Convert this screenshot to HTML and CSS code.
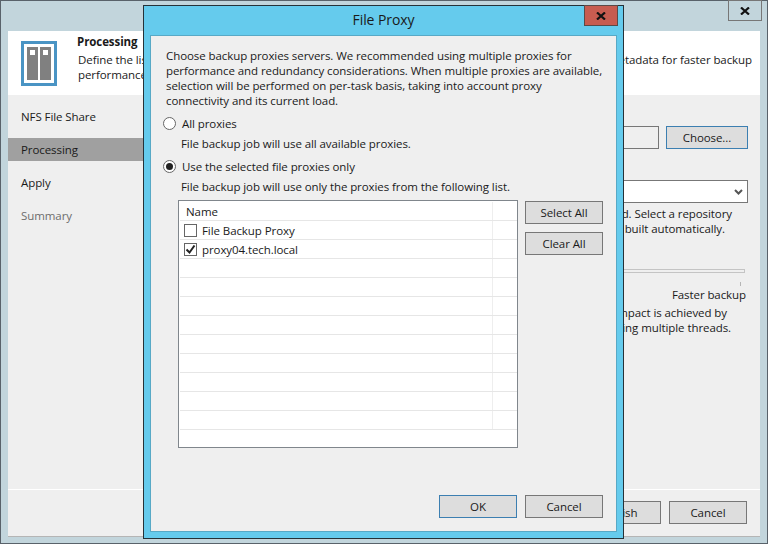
FILE: index.html
```html
<!DOCTYPE html>
<html lang="en">
<head>
    <meta charset="UTF-8">
    <title>File Proxy</title>
    <link rel="stylesheet" href="styles.css">
</head>
<body>
    <div class="window">
        <div class="titlebar">
            <button class="win-close">
                <svg width="10" height="8" viewBox="0 0 10 8"><path d="M1 .5l8 7M9 .5l-8 7" fill="none" stroke="#111" stroke-width="2.2"/></svg>
            </button>
        </div>
        <div class="wizard">
            <div class="head">
                <svg class="head-icon" width="36" height="45" viewBox="0 0 36 45">
                    <rect x="1.5" y="1.5" width="33" height="42" fill="#fff" stroke="#4a94c4" stroke-width="3"/>
                    <rect x="6" y="6" width="11" height="33" fill="#808080"/>
                    <rect x="19" y="6" width="11" height="33" fill="#808080"/>
                    <rect x="9" y="9" width="5" height="5" fill="#fff"/>
                    <rect x="22" y="9" width="5" height="5" fill="#fff"/>
                </svg>
                <div class="head-text">
                    <div class="head-title">Processing</div>
                    <div class="head-line">
                        <span>Define the list of backup proxies and a repository</span>
                        <span>for storing file metadata for faster backup</span>
                    </div>
                    <div>performance.</div>
                </div>
            </div>
            <div class="body">
                <div class="steps">
                    <div class="step">NFS File Share</div>
                    <div class="step selected">Processing</div>
                    <div class="step">Apply</div>
                    <div class="step muted">Summary</div>
                </div>
                <div class="main">
                    <div class="row">
                        <input class="field" type="text">
                        <button class="btn focus choose">Choose...</button>
                    </div>
                    <div class="select">
                        <svg width="9" height="6" viewBox="0 0 9 6"><path d="M1 1l3.5 3.5L8 1" fill="none" stroke="#555" stroke-width="2"/></svg>
                    </div>
                    <div class="note">
                        <div class="end-a">Metadata repository will be used. Select a repository</div>
                        <div class="end-b">and the index will be built automatically.</div>
                    </div>
                    <div class="slider"></div>
                    <div class="tick"></div>
                    <div class="slider-label">Faster backup</div>
                    <div class="note">
                        <div class="end-c">Lower source impact is achieved by</div>
                        <div class="end-d">copying the data using multiple threads.</div>
                    </div>
                </div>
            </div>
            <div class="foot">
                <button class="btn">Finish</button>
                <button class="btn">Cancel</button>
            </div>
        </div>
    </div>

    <div class="dialog">
        <div class="dialog-title">
            <span>File Proxy</span>
            <button class="dialog-close">
                <svg width="10" height="8" viewBox="0 0 10 8"><path d="M1 .5l8 7M9 .5l-8 7" fill="none" stroke="#111" stroke-width="2.2"/></svg>
            </button>
        </div>
        <div class="dialog-body">
            <p class="intro">Choose backup proxies servers. We recommended using multiple proxies for performance and redundancy considerations. When multiple proxies are available, selection will be performed on per-task basis, taking into account proxy connectivity and its current load.</p>

            <label class="option"><span class="radio"></span>All proxies</label>
            <div class="hint">File backup job will use all available proxies.</div>

            <label class="option"><span class="radio on"></span>Use the selected file proxies only</label>
            <div class="hint">File backup job will use only the proxies from the following list.</div>

            <div class="picker">
                <div class="list">
                    <div class="list-head"><div class="cell">Name</div><div class="cell-end"></div></div>
                    <div class="list-row">
                        <div class="cell"><span class="check"></span><span>File Backup Proxy</span></div><div class="cell-end"></div>
                    </div>
                    <div class="list-row">
                        <div class="cell">
                            <span class="check">
                                <svg width="11" height="11" viewBox="0 0 11 11"><path d="M1.5 5.5l3 3 5-7" fill="none" stroke="#222" stroke-width="2"/></svg>
                            </span><span>proxy04.tech.local</span>
                        </div><div class="cell-end"></div>
                    </div>
                    <div class="list-row"><div class="cell"></div><div class="cell-end"></div></div>
                    <div class="list-row"><div class="cell"></div><div class="cell-end"></div></div>
                    <div class="list-row"><div class="cell"></div><div class="cell-end"></div></div>
                    <div class="list-row"><div class="cell"></div><div class="cell-end"></div></div>
                    <div class="list-row"><div class="cell"></div><div class="cell-end"></div></div>
                    <div class="list-row"><div class="cell"></div><div class="cell-end"></div></div>
                    <div class="list-row"><div class="cell"></div><div class="cell-end"></div></div>
                    <div class="list-row"><div class="cell"></div><div class="cell-end"></div></div>
                    <div class="list-row"><div class="cell"></div><div class="cell-end"></div></div>
                </div>
                <div class="picker-btns">
                    <button class="btn">Select All</button>
                    <button class="btn">Clear All</button>
                </div>
            </div>

            <div class="dialog-foot">
                <button class="btn focus">OK</button>
                <button class="btn">Cancel</button>
            </div>
        </div>
    </div>
</body>
</html>
```

FILE: styles.css
```css
* {
    margin: 0;
    padding: 0;
    box-sizing: border-box;
}

body {
    width: 768px;
    height: 544px;
    overflow: hidden;
    position: relative;
    font-family: "Open Sans", "Liberation Sans", sans-serif;
    font-size: 11.5px;
    letter-spacing: -0.08px;
    line-height: 15px;
    color: #1a1a1a;
}

button, input {
    font: inherit;
    letter-spacing: inherit;
    color: inherit;
}

button {
    display: flex;
    align-items: center;
    justify-content: center;
}

.window {
    width: 768px;
    height: 544px;
    background: #c2d5dc;
    border: 1px solid #59626a;
    display: flex;
    flex-direction: column;
}

.titlebar {
    height: 30px;
    display: flex;
    justify-content: flex-end;
    padding-right: 5px;
}

.win-close {
    width: 34px;
    height: 21px;
    margin-top: -1px;
    background: #c2d5dc;
    border: 1px solid #777;
}

.wizard {
    margin: 0 7px;
    height: 505px;
    background: #efefef;
    display: flex;
    flex-direction: column;
    box-shadow: 0 1px 0 #b5b5b5;
}

.head {
    height: 64px;
    background: #fff;
    display: flex;
    flex-shrink: 0;
}

.head-icon {
    margin: 10px 20px 0 13px;
}

.head-text {
    flex: 1;
    padding: 3px 8px 0 1px;
}

.head-title {
    font-weight: bold;
    margin: 0 0 3px -1px;
}

.head-line {
    display: flex;
    justify-content: space-between;
}

.body {
    flex: 1;
    display: flex;
}

.steps {
    width: 135px;
    padding-top: 10px;
    display: flex;
    flex-direction: column;
    gap: 10px;
}

.step {
    height: 23px;
    line-height: 23px;
    padding-left: 13px;
    white-space: nowrap;
}

.step.selected {
    background: #a0a0a0;
    width: 200px;
}

.step.muted {
    color: #6d6d6d;
}

.main {
    flex: 1;
    padding: 31px 12px 0 0;
    white-space: nowrap;
}

.row {
    display: flex;
    gap: 7px;
}

.field {
    flex: 1;
    height: 23px;
    min-width: 0;
    background: #efefef;
    border: 1px solid #777;
}

.select {
    height: 23px;
    margin-top: 31px;
    background: #fff;
    border: 1px solid #777;
    display: flex;
    align-items: center;
    justify-content: flex-end;
    padding-right: 4px;
}

.note {
    margin-top: 3px;
    text-align: right;
}

.end-a { padding-right: 16px; }
.end-b { padding-right: 23px; }
.end-c { padding-right: 21px; }
.end-d { padding-right: 17px; }

.slider {
    height: 4px;
    margin: 33px 3px 0 0;
    background: #efefef;
    border: 1px solid #c4c4c4;
}

.tick {
    width: 1px;
    height: 4px;
    background: #b5b5b5;
    margin: 9px 0 0 auto;
    position: relative;
    left: -7px;
}

.slider-label {
    text-align: right;
    margin: 1px 2px 0 0;
}

.foot {
    height: 47px;
    flex-shrink: 0;
    border-top: 1px solid #fff;
    display: flex;
    justify-content: flex-end;
    gap: 8px;
    padding: 11px 13px 0 0;
}

.btn {
    width: 78px;
    height: 23px;
    flex-shrink: 0;
    background: #dddddd;
    border: 1px solid #777;
}

.btn.focus {
    border-color: #3c7fb1;
}

.choose {
    width: 82px;
}

/* the dialog sits on top of the wizard */
.dialog {
    position: absolute;
    left: 143px;
    top: 5px;
    width: 481px;
    height: 534px;
    background: #65cbed;
    border: 1px solid #263238;
    display: flex;
    flex-direction: column;
    padding: 0 7px 7px;
}

.dialog-title {
    height: 30px;
    flex-shrink: 0;
    display: flex;
    justify-content: center;
    font-size: 14px;
    line-height: 28px;
    position: relative;
}

.dialog-close {
    position: absolute;
    right: -2px;
    top: -1px;
    width: 34px;
    height: 21px;
    background: #c75c50;
    border: 1px solid #5a4a48;
}

.dialog-body {
    flex: 1;
    background: #efefef;
    box-shadow: 0 0 0 1px #58a9c6;
    padding: 12px 0 0 15px;
    display: flex;
    flex-direction: column;
}

.intro {
    width: 440px;
}

.option {
    display: flex;
    align-items: center;
    margin: 8px 0 0 -3px;
    height: 15px;
}

.radio {
    width: 13px;
    height: 13px;
    margin-right: 6px;
    border: 1px solid #666;
    border-radius: 50%;
    background: #fff;
    display: flex;
    align-items: center;
    justify-content: center;
}

.radio.on::before {
    content: "";
    width: 7px;
    height: 7px;
    border-radius: 50%;
    background: #222;
}

.hint {
    margin: 5px 0 0 15px;
}

.picker {
    display: flex;
    gap: 7px;
    margin: 6px 0 0 12px;
}

.list {
    width: 340px;
    height: 248px;
    flex-shrink: 0;
    background: #fff;
    border: 1px solid #80868c;
    padding: 1px 0 0 1px;
}

.list-head, .list-row {
    display: flex;
    height: 19px;
    border-bottom: 1px solid #e6e6e6;
}

.cell {
    width: 313px;
    padding-left: 6px;
    display: flex;
    align-items: center;
    border-right: 1px solid #eeeeee;
}

.list-head .cell {
    padding-top: 1px;
}

.cell-end {
    flex: 1;
}

.check {
    width: 13px;
    height: 13px;
    flex-shrink: 0;
    margin: 0 5px 0 -2px;
    background: #fff;
    border: 1px solid #666;
    display: flex;
    align-items: center;
    justify-content: center;
}

.picker-btns {
    display: flex;
    flex-direction: column;
    gap: 8px;
    padding-top: 1px;
}

.dialog-foot {
    margin-top: auto;
    padding: 0 13px 13px 0;
    display: flex;
    justify-content: flex-end;
    gap: 8px;
}
```
